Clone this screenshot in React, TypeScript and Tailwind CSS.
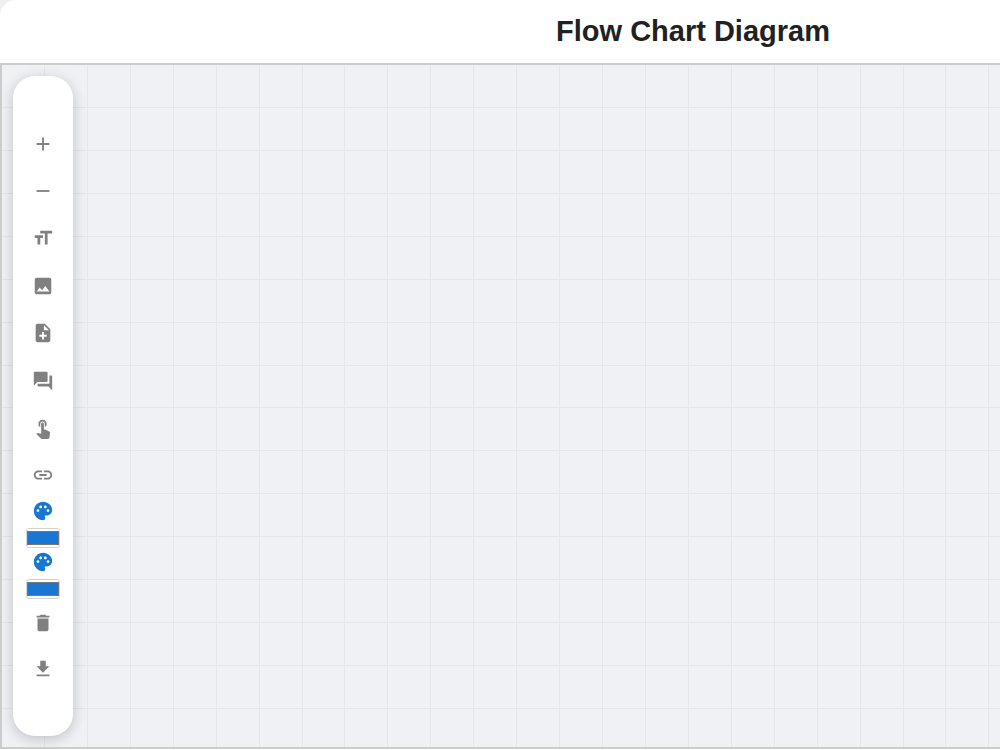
import { useState } from "react";
import type { IconType } from "react-icons";
import {
  MdAdd,
  MdDelete,
  MdDownload,
  MdFormatSize,
  MdForum,
  MdImage,
  MdLink,
  MdNoteAdd,
  MdPalette,
  MdRemove,
  MdTouchApp,
} from "react-icons/md";

const GRID_PITCH = 42.93;
const GRID_LINES = Array.from({ length: 80 }, (_, i) =>
  Math.round((i + 1) * GRID_PITCH)
);

const tools: { label: string; icon: IconType }[] = [
  { label: "Zoom in", icon: MdAdd },
  { label: "Zoom out", icon: MdRemove },
  { label: "Add text", icon: MdFormatSize },
  { label: "Add image", icon: MdImage },
  { label: "Add note", icon: MdNoteAdd },
  { label: "Add comment", icon: MdForum },
  { label: "Add button", icon: MdTouchApp },
  { label: "Add link", icon: MdLink },
];

const actions: { label: string; icon: IconType }[] = [
  { label: "Delete", icon: MdDelete },
  { label: "Download", icon: MdDownload },
];

const ToolButton = ({ label, icon: Icon }: { label: string; icon: IconType }) => (
  <button
    type="button"
    aria-label={label}
    className="flex w-10 flex-1 items-center justify-center text-[#808080]"
  >
    <Icon size={22} />
  </button>
);

const ColorPicker = ({ id, label }: { id: string; label: string }) => {
  const [color, setColor] = useState("#1976d2");

  return (
    <div className="flex flex-col items-center gap-1.5">
      <label htmlFor={id} aria-label={label} className="text-[#1976d2]">
        <MdPalette size={22} />
      </label>
      <input
        id={id}
        type="color"
        value={color}
        onChange={(e) => setColor(e.target.value)}
        className="block h-5 w-[34px] appearance-none rounded-[3px] border border-[#d3d3d3] bg-white p-0 [&::-webkit-color-swatch]:rounded-none [&::-webkit-color-swatch]:border [&::-webkit-color-swatch]:border-[#777777] [&::-webkit-color-swatch-wrapper]:px-0 [&::-webkit-color-swatch-wrapper]:py-0.5"
      />
    </div>
  );
};

const Toolbar = () => (
  <aside className="relative flex w-15 flex-col items-center rounded-[22px] bg-white py-11 shadow-[0_3px_14px_rgba(0,0,0,0.2)]">
    <div className="flex h-[379px] flex-col">
      {tools.map((tool) => (
        <ToolButton key={tool.label} {...tool} />
      ))}
    </div>
    <div className="flex flex-col gap-[3px] py-px">
      <ColorPicker id="fill-color" label="Fill color" />
      <ColorPicker id="line-color" label="Line color" />
    </div>
    <div className="flex h-[92px] flex-col">
      {actions.map((action) => (
        <ToolButton key={action.label} {...action} />
      ))}
    </div>
  </aside>
);

const CanvasGrid = () => (
  <svg
    className="absolute inset-0 h-full w-full"
    stroke="#e6e6e9"
    shapeRendering="crispEdges"
    aria-hidden="true"
  >
    {GRID_LINES.map((pos) => (
      <g key={pos}>
        <line x1={pos - 0.5} x2={pos - 0.5} y1="0" y2="100%" />
        <line x1="0" x2="100%" y1={pos - 0.5} y2={pos - 0.5} />
      </g>
    ))}
  </svg>
);

export default function App() {
  return (
    <div className="flex min-h-screen flex-col bg-[#f0f0f0] font-['Liberation_Sans',Arial,sans-serif]">
      <div className="flex flex-1 flex-col rounded-tl-2xl bg-white pb-px">
        <header className="flex h-[63px] items-center justify-center pl-[386px]">
          <h1 className="text-[29px] font-bold whitespace-nowrap text-[#212121]">
            Flow Chart Diagram
          </h1>
        </header>
        <main className="relative flex flex-1 items-start overflow-hidden border-y-2 border-l-2 border-[#cdcccc] bg-[#f0f1f5] pt-[11px] pb-2.5 pl-[11px]">
          <CanvasGrid />
          <Toolbar />
        </main>
      </div>
    </div>
  );
}
